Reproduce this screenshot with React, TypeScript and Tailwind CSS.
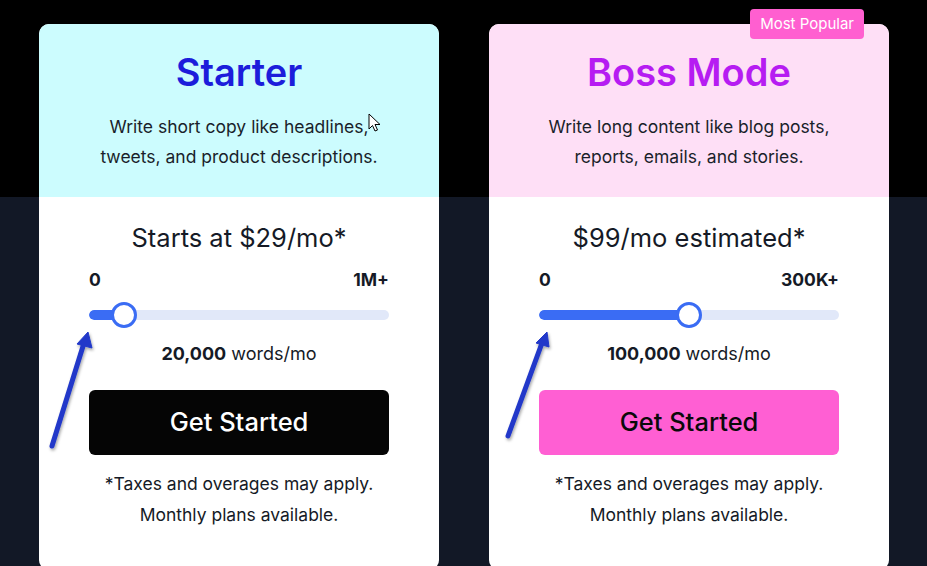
import React from 'react';

type Plan = {
  name: string;
  titleColor: string;
  headerBg: string;
  desc: [string, string];
  price: string;
  max: string;
  pct: number;
  words: string;
  buttonClass: string;
  badge?: string;
};

const plans: Plan[] = [
  {
    name: 'Starter',
    titleColor: 'text-[#1c1ddb]',
    headerBg: 'bg-[#ccfcfe]',
    desc: ['Write short copy like headlines,', 'tweets, and product descriptions.'],
    price: 'Starts at $29/mo*',
    max: '1M+',
    pct: 11.5,
    words: '20,000',
    buttonClass: 'bg-[#050505] text-white',
  },
  {
    name: 'Boss Mode',
    titleColor: 'text-[#b61cf2]',
    headerBg: 'bg-[#fedff6]',
    desc: ['Write long content like blog posts,', 'reports, emails, and stories.'],
    price: '$99/mo estimated*',
    max: '300K+',
    pct: 50,
    words: '100,000',
    buttonClass: 'bg-[#ff5fd3] text-[#0a0a0a]',
    badge: 'Most Popular',
  },
];

const Slider: React.FC<{ pct: number }> = ({ pct }) => (
  <div className="relative h-[26px] flex items-center">
    <div className="w-full h-[10px] rounded-full bg-[#e1e8f9] overflow-hidden">
      <div className="h-full bg-[#3a6cf4] rounded-full" style={{ width: `${pct}%` }} />
    </div>
    <div
      className="absolute top-0 w-[26px] h-[26px] -ml-[13px] rounded-full bg-white border-[3px] border-[#3a6cf4]"
      style={{ left: `${pct}%` }}
    />
  </div>
);

const Card: React.FC<{ plan: Plan }> = ({ plan }) => (
  <div className="relative w-[400px] shrink-0 rounded-[10px] bg-white">
    {plan.badge && (
      <div className="absolute -top-[15px] right-[25px] h-[30px] px-[10px] flex items-center rounded-[4px] bg-[#ff5fd0] text-white text-[15px]">
        {plan.badge}
      </div>
    )}
    <div className={`${plan.headerBg} rounded-t-[10px] h-[173px] pt-[25px] flex flex-col items-center`}>
      <h2 className={`${plan.titleColor} text-[38px] leading-[46px] font-semibold`}>{plan.name}</h2>
      <p className="mt-[17px] text-[17.5px] leading-[30px] text-[#1a1f2b] text-center">
        {plan.desc[0]}
        <br />
        {plan.desc[1]}
      </p>
    </div>
    <div className="px-[50px] pt-[25px] pb-[40px] flex flex-col">
      <div className="text-center text-[25.5px] leading-[32px] text-[#151a26]">{plan.price}</div>
      <div className="mt-[14px] flex justify-between text-[17.5px] leading-[24px] font-bold text-[#151a26]">
        <span>0</span>
        <span>{plan.max}</span>
      </div>
      <div className="mt-[10px]">
        <Slider pct={plan.pct} />
      </div>
      <div className="mt-[13px] text-center text-[18px] leading-[26px] text-[#151a26]">
        <span className="font-bold">{plan.words}</span> words/mo
      </div>
      <button className={`${plan.buttonClass} mt-[23px] h-[65px] rounded-[6px] text-[25.5px] font-medium`}>
        Get Started
      </button>
      <p className="mt-[13px] text-center text-[17.5px] leading-[31px] text-[#151a26]">
        *Taxes and overages may apply.
        <br />
        Monthly plans available.
      </p>
    </div>
  </div>
);

export default function App() {
  return (
    <div
      className="relative h-[566px] w-[927px] overflow-hidden bg-[linear-gradient(to_bottom,#000_197px,#121826_197px)]"
      style={{ fontFamily: 'Inter, "Noto Sans", sans-serif' }}
    >
      <div className="flex gap-[50px] pl-[39px] pt-[24px]">
        {plans.map((p) => (
          <Card key={p.name} plan={p} />
        ))}
      </div>

      {/* annotation arrows */}
      <svg className="absolute inset-0 pointer-events-none" width="927" height="566" viewBox="0 0 927 566">
        <defs>
          <filter id="sh" x="-50%" y="-50%" width="200%" height="200%">
            <feDropShadow dx="1" dy="2" stdDeviation="1.5" floodColor="#000" floodOpacity="0.35" />
          </filter>
        </defs>
        <g filter="url(#sh)" fill="#2139c9" stroke="#2139c9">
          <line x1="52" y1="446" x2="84" y2="343" strokeWidth="5" strokeLinecap="round" />
          <polygon points="88,332 77,344 92,348" strokeWidth="1" strokeLinejoin="round" />
          <line x1="508" y1="436" x2="542" y2="343" strokeWidth="5" strokeLinecap="round" />
          <polygon points="547,332 536,343 549,347" strokeWidth="1" strokeLinejoin="round" />
        </g>
      </svg>

      {/* mouse cursor */}
      <svg className="absolute left-[368px] top-[113px] pointer-events-none" width="14" height="20" viewBox="0 0 14 20">
        <path d="M1 1 L1 16 L4.5 12.5 L7 18 L9.5 17 L7 11.5 L12 11.5 Z" fill="#fff" stroke="#000" strokeWidth="1" strokeLinejoin="round" />
      </svg>
    </div>
  );
}
